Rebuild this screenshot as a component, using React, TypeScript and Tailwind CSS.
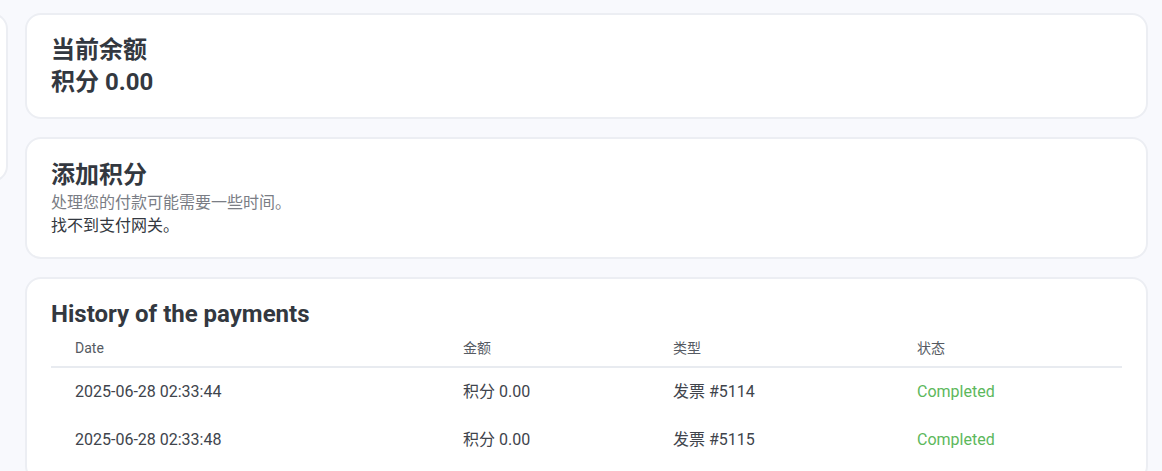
import React from "react";

const rows = [
  { date: "2025-06-28 02:33:44", amount: "积分 0.00", type: "发票 #5114", status: "Completed" },
  { date: "2025-06-28 02:33:48", amount: "积分 0.00", type: "发票 #5115", status: "Completed" },
];

const cols = "grid grid-cols-[388px_210px_244px_1fr]";

const App = () => {
  return (
    <div
      className="min-h-[471px] bg-[#f8f9fd] text-[#333840] overflow-hidden"
      style={{ fontFamily: 'Roboto, "Noto Sans CJK SC", sans-serif' }}
    >
      <div className="flex items-start gap-[17px] pt-[13px] pr-[14px]">
        {/* 左侧栏 (只露出一点) */}
        <aside className="w-[240px] ml-[-232px] h-[169px] shrink-0 rounded-2xl border-2 border-[#eceef3] bg-white" />

        <main className="flex-1 flex flex-col gap-[18px]">
          {/* 当前余额 */}
          <section className="rounded-2xl border-2 border-[#eceef3] bg-white px-6 pt-[19px] pb-[19px]">
            <h2 className="text-2xl leading-8 font-bold">当前余额</h2>
            <div className="text-2xl leading-8 font-bold">积分 0.00</div>
          </section>

          {/* 添加积分 */}
          <section className="rounded-2xl border-2 border-[#eceef3] bg-white px-6 pt-5 pb-5">
            <h2 className="text-2xl leading-8 font-bold">添加积分</h2>
            <p className="text-base leading-[23px] text-[#7a7d85]">处理您的付款可能需要一些时间。</p>
            <p className="text-base leading-[23px] text-[#333840]">找不到支付网关。</p>
          </section>

          {/* 付款记录 */}
          <section className="rounded-2xl border-2 border-[#eceef3] bg-white px-6 pt-[19px] pb-4">
            <h2 className="text-2xl leading-8 font-bold">History of the payments</h2>
            <div className={`${cols} h-[38px] items-center border-b-2 border-[#e8ebf0] text-sm text-[#555a62]`}>
              <div className="pl-6">Date</div>
              <div className="pl-6">金额</div>
              <div className="pl-6">类型</div>
              <div className="pl-6">状态</div>
            </div>
            {rows.map((r) => (
              <div key={r.type} className={`${cols} h-12 items-center text-base text-[#40444c]`}>
                <div className="pl-6">{r.date}</div>
                <div className="pl-6">{r.amount}</div>
                <div className="pl-6">{r.type}</div>
                <div className="pl-6 text-[#5cb85c]">{r.status}</div>
              </div>
            ))}
          </section>
        </main>
      </div>
    </div>
  );
};

export default App;
